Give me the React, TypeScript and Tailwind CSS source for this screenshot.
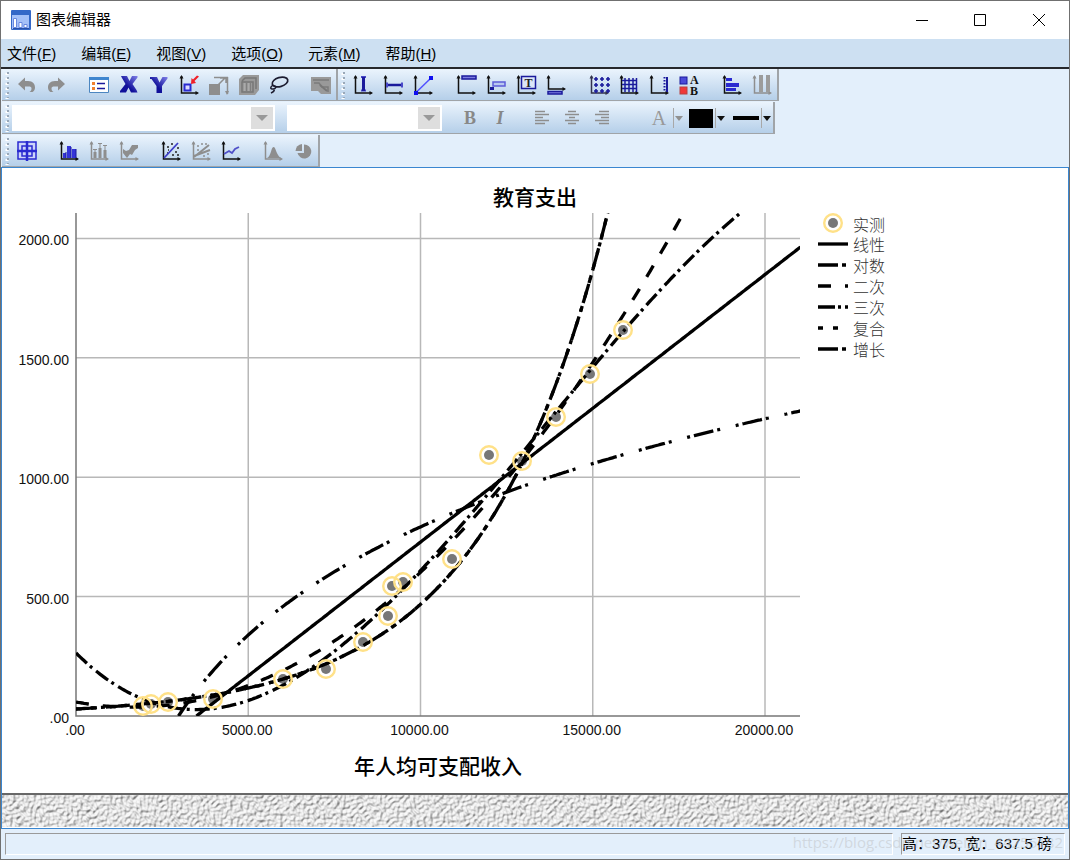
import React from "react";

const NAVY = "#1a1a9c";
const BLUE = "#2a2ad0";
const GRAY = "#8e8e8e";

/* ---------- chart ---------- */

const LEFT = 74;
const RIGHT = 798;
const TOP = 45;
const BOTTOM = 548;

const xPos = (v: number) => LEFT + v * 0.03445;
const yPos = (v: number) => BOTTOM - v * 0.2388;

const xTicks = [0, 5000, 10000, 15000, 20000];
const yTicks = [0, 500, 1000, 1500, 2000];

const tickLabel = (v: number) => (v === 0 ? ".00" : v.toFixed(2));

// curve heights above the axis, u measured from the left edge of the plot
const curves = [
  { name: "linear", from: 120.5, dash: undefined, fn: (u: number) => (u - 120.5) * 0.7765 },
  { name: "log", from: 102.5, dash: "20 4 3 16 3 4", fn: (u: number) => 156 * Math.log(u / 102.5) },
  { name: "quadratic", from: 0, dash: "13 14", fn: (u: number) => 14 - 0.1847 * u + 0.001629 * u * u },
  {
    name: "cubic",
    from: 0,
    dash: "15 4 3 5",
    fn: (u: number) => 63 - 0.991 * u + 0.004736 * u * u - 0.000003383 * u * u * u,
  },
  { name: "compound", from: 0, dash: "6 9", fn: (u: number) => 7 * Math.exp(0.00804 * u) },
  { name: "growth", from: 0, dash: "20 5 4 5", fn: (u: number) => 7 * Math.exp(0.00804 * u) },
];

function curvePath(fn: (u: number) => number, from: number) {
  const pts: string[] = [];
  for (let u = from; u <= RIGHT - LEFT + 2; u += 2) {
    const y = BOTTOM - fn(u);
    pts.push(`${(LEFT + u).toFixed(1)},${y.toFixed(1)}`);
    if (y < TOP - 10) break;
  }
  return "M" + pts.join("L");
}

const observed = [
  [141, 538], [149, 536], [166, 534], [211, 531], [281, 511], [324, 501], [361, 474], [386, 448],
  [390, 418], [401, 414], [450, 391], [487, 287], [520, 293], [554, 249], [588, 206], [621, 162],
];

const legend = [
  { label: "线性", dash: undefined },
  { label: "对数", dash: "20 4 4 10" },
  { label: "二次", dash: "13 14 3 9" },
  { label: "三次", dash: "17 3 3 4 3 9" },
  { label: "复合", dash: "5 10" },
  { label: "增长", dash: "20 4 4 10" },
];

function Chart() {
  return (
    <svg
      width="900"
      height="625"
      viewBox="0 0 900 625"
      role="img"
      aria-label="教育支出"
      className="block shrink-0"
    >
      <clipPath id="plot">
        <rect x={LEFT} y={TOP} width={RIGHT - LEFT} height={BOTTOM - TOP} />
      </clipPath>

      <g stroke="#b8b8b8" strokeWidth="1.5">
        {xTicks.slice(1).map((v) => (
          <line key={v} x1={xPos(v)} x2={xPos(v)} y1={TOP} y2={BOTTOM} />
        ))}
        {yTicks.slice(1).map((v) => (
          <line key={v} x1={LEFT} x2={RIGHT} y1={yPos(v)} y2={yPos(v)} />
        ))}
      </g>
      <path d={`M${LEFT} ${TOP}V${BOTTOM}H${RIGHT}`} fill="none" stroke="#777" strokeWidth="1.5" />

      {observed.map(([x, y]) => (
        <g key={`${x}-${y}`}>
          <circle cx={x} cy={y} r="8" fill="#fff" />
          <circle cx={x} cy={y} r="5" fill="#777" />
        </g>
      ))}
      <g clipPath="url(#plot)" fill="none" stroke="#000" strokeWidth="3.3">
        {curves.map((c) => (
          <path key={c.name} d={curvePath(c.fn, c.from)} strokeDasharray={c.dash} />
        ))}
      </g>
      {observed.map(([x, y]) => (
        <circle key={`${x}-${y}`} cx={x} cy={y} r="8.8" fill="none" stroke="#ffe188" strokeWidth="2.4" />
      ))}

      <g fontFamily="'Liberation Sans', sans-serif" fontSize="14" fill="#111">
        {xTicks.map((v) => (
          <text key={v} x={xPos(v) - 1} y={567} textAnchor="middle">
            {tickLabel(v)}
          </text>
        ))}
        {yTicks.map((v) => (
          <text key={v} x={67} y={yPos(v) + 7} textAnchor="end">
            {tickLabel(v)}
          </text>
        ))}
      </g>

      <g fontFamily="'Noto Sans CJK SC', sans-serif" fill="#000">
        <text x={533} y={37} fontSize="21" fontWeight="500" textAnchor="middle">
          教育支出
        </text>
        <text x={436} y={606} fontSize="21" fontWeight="500" textAnchor="middle">
          年人均可支配收入
        </text>
        <g fontSize="16" fill="#333" fontWeight="300">
          <text x={851} y={63}>实测</text>
          {legend.map((l, i) => (
            <text key={l.label} x={851} y={83 + i * 21}>
              {l.label}
            </text>
          ))}
        </g>
      </g>
      <circle cx="831" cy="55" r="5" fill="#777" />
      <circle cx="831" cy="55" r="8.8" fill="none" stroke="#ffe188" strokeWidth="2.4" />
      {legend.map((l, i) => (
        <line
          key={l.label}
          x1="816"
          x2="846"
          y1={76 + i * 21}
          y2={76 + i * 21}
          stroke="#000"
          strokeWidth="3.3"
          strokeDasharray={l.dash}
        />
      ))}
    </svg>
  );
}

/* ---------- toolbar icons ---------- */

function Icon({ children }: { children: React.ReactNode }) {
  return (
    <svg width="20" height="20" viewBox="0 0 20 20" fill="none" aria-hidden="true" className="overflow-visible">
      {children}
    </svg>
  );
}

function Axes({ color = "#111", base = 18 }: { color?: string; base?: number }) {
  return (
    <>
      <path d={`M2.5 1V${base}H18.5`} stroke={color} strokeWidth="1.5" />
      <path d={`M.5 3.5L2.5 0l2 3.5zM16.5 ${base - 2}L20 ${base}l-3.5 2z`} fill={color} />
    </>
  );
}

const icons = {
  undo: (
    <Icon>
      <path d="M1 9L8 2.5V6h3c5 0 7 3 7 6.500c0 2-1 3.500-2.500 4.500h-3c1.500-1 2-2 2-3.500 0-1.500-1-2-3-2H8v4z" fill={GRAY} />
    </Icon>
  ),
  redo: (
    <Icon>
      <path d="M18 9L11 2.500V6H8c-5 0-7 3-7 6.500 0 2 1 3.500 2.500 4.500h3C5 16 4.500 15 4.500 13.500c0-1.500 1-2 3-2H11v4z" fill={GRAY} />
    </Icon>
  ),
  properties: (
    <Icon>
      <path d="M.5 2.500h19v15H.5z" fill="#fff" stroke="#4c86c0" />
      <path d="M0 2h20v3H0z" fill="#3f86cf" />
      <path d="M3 7h3v3H3zM3 12h3v3H3z" fill="#f08030" />
      <path d="M8 8.500h8M8 13.500h8" stroke={NAVY} strokeWidth="1.500" />
    </Icon>
  ),
  x: (
    <Icon>
      <defs>
        <linearGradient id="letter" x1="0" y1="1" x2="1" y2="0">
          <stop offset=".4" stopColor="#10109a" />
          <stop offset="1" stopColor="#8080e8" />
        </linearGradient>
      </defs>
      <path d="M2 1h6l2.500 5L13 1h5.500v1.500L13.500 9l4 6 1 2.500h-6.500L9.500 12.500 7 17.500H1V16l5.500-7L3 3z" fill="url(#letter)" />
    </Icon>
  ),
  y: (
    <Icon>
      <path d="M1 2h7l2.500 5.500L13.500 2h5v1.500L13 11v7H7.500v-7L2.500 4H1z" fill="url(#letter)" />
    </Icon>
  ),
  scale: (
    <Icon>
      <Axes />
      <rect x="5.500" y="9.500" width="6" height="6" fill="#d8d8ff" stroke={BLUE} strokeWidth="2" />
      <path d="M20 1.500L15.500 6l1.500 2-5 1 .5-6 1.500 1.500L18 .5z" fill="#f02028" />
    </Icon>
  ),
  rescale: (
    <Icon>
      <path d="M0 9h11v11H0z" fill={GRAY} />
      <path d="M5 2.500h14M18.500 2v17M9 10l7-7M11 3h6v5" stroke={GRAY} strokeWidth="1.500" />
      <path d="M16 16h4l-2 4z" fill={GRAY} />
    </Icon>
  ),
  cube: (
    <Icon>
      <path d="M0 4l4-4h16v15l-4 5H0z" fill="#999" />
      <path d="M3 7h11v10H3zM7 8v8M11 8v8M3 6l3-3h11v11" stroke="#777" strokeWidth="1.500" />
      <path d="M6 8v8M10 8v8" stroke="#bbb" />
    </Icon>
  ),
  lasso: (
    <Icon>
      <ellipse cx="11" cy="7" rx="8" ry="4.500" transform="rotate(-16 11 7)" stroke="#1c1c30" strokeWidth="1.700" />
      <path d="M4 10c-3 2-3 4 0 4s4-3 1-3M5 14c1 2-1 3-3 4" stroke="#1c1c30" strokeWidth="1.500" />
    </Icon>
  ),
  pane: (
    <Icon>
      <path d="M0 2h20v12l0 5H10l-3-3H0z" fill="#999" />
      <path d="M2 5h16M3 8h5l3 4h6v5" stroke="#7b7b7b" strokeWidth="1.500" />
      <path d="M9 10l7 6" stroke="#777" strokeWidth="2" />
    </Icon>
  ),
  yError: (
    <Icon>
      <Axes />
      <path d="M8 2h5M8 15.500h5" stroke="#4848c8" strokeWidth="2" />
      <path d="M10.500 2v14" stroke={NAVY} strokeWidth="3" />
    </Icon>
  ),
  xError: (
    <Icon>
      <Axes />
      <path d="M3 10h17" stroke={NAVY} strokeWidth="2.500" />
      <path d="M4 7.500v5M19 7.500v5" stroke="#4848c8" strokeWidth="2" />
    </Icon>
  ),
  refLine: (
    <Icon>
      <Axes />
      <path d="M2.500 18L18 3" stroke="#5050ff" strokeWidth="1.500" />
      <path d="M1 16h4v4H1zM16 1h4v4h-4z" fill="#1010f0" />
    </Icon>
  ),
  title: (
    <Icon>
      <Axes />
      <rect x="6" y="1" width="14" height="3" fill="#7c7ce0" stroke={NAVY} strokeWidth="1.500" />
    </Icon>
  ),
  annotation: (
    <Icon>
      <Axes />
      <rect x="7" y="7" width="12" height="4" fill="#b8c8f0" stroke="#5c5cd8" strokeWidth="1.500" />
      <path d="M4 12h4v3H4z" fill={NAVY} />
    </Icon>
  ),
  textBox: (
    <Icon>
      <Axes />
      <rect x="5.500" y="1.500" width="14" height="12" fill="#dce6f8" stroke={NAVY} strokeWidth="1.500" />
      <text x="12.500" y="12" textAnchor="middle" fontFamily="Liberation Serif, serif" fontWeight="700" fontSize="12" fill="#222">
        T
      </text>
    </Icon>
  ),
  footnote: (
    <Icon>
      <Axes base={14} />
      <rect x="2" y="16.500" width="14" height="2.500" fill="#7c7ce0" stroke={NAVY} strokeWidth="1.500" />
    </Icon>
  ),
  dots: (
    <Icon>
      <Axes color="#33334c" />
      <path
        d="M5 4h4M11 4h4M17 4h4M5 10h4M11 10h4M17 10h4M5 16h4M11 16h4M17 16h4M7 2v4M13 2v4M19 2v4M7 8v4M13 8v4M19 8v4M7 14v4M13 14v4M19 14v4"
        stroke={NAVY}
        strokeWidth="1.600"
      />
    </Icon>
  ),
  grid: (
    <Icon>
      <Axes />
      <path d="M3 5.500h15M3 9.500h15M3 13.500h15M6 3v14M10 3v14M14 3v14M17.500 3v14" stroke={NAVY} strokeWidth="1.500" />
    </Icon>
  ),
  derivedAxis: (
    <Icon>
      <Axes />
      <path d="M18 2v15" stroke={NAVY} strokeWidth="2" />
      <path d="M15.500 2v15" stroke={NAVY} strokeWidth="2" strokeDasharray="1.500 1.500" />
    </Icon>
  ),
  legend: (
    <Icon>
      <rect x="1" y="2" width="7" height="7" fill="#4a4ad8" stroke={NAVY} />
      <rect x="1" y="12" width="7" height="7" fill="#f03838" stroke="#b84040" />
      <g fontFamily="Liberation Serif, serif" fontWeight="700" fontSize="12" fill="#111">
        <text x="11" y="9">A</text>
        <text x="11" y="20">B</text>
      </g>
    </Icon>
  ),
  transpose: (
    <Icon>
      <Axes />
      <path d="M4 3h6v3H4zM4 8h13v4H4zM4 13h10v3H4z" fill={BLUE} />
    </Icon>
  ),
  columns: (
    <Icon>
      <Axes color={GRAY} />
      <path d="M7 0h4v17H7zM14 0h4v17h-4z" fill="#9c9c9c" />
    </Icon>
  ),
  select: (
    <Icon>
      <rect x="1" y="1" width="18" height="17" stroke={BLUE} strokeWidth="1.500" fill="#cdd4fa" />
      <rect x="5" y="5" width="10" height="10" stroke={BLUE} strokeWidth="1.500" />
      <path d="M10 0v20M0 10h20" stroke={BLUE} strokeWidth="2.500" />
    </Icon>
  ),
  bars: (
    <Icon>
      <Axes />
      <path d="M4 12h3v5H4zM8 5h4v12H8zM13 8h4v9h-4z" fill="#3434d8" />
      <path d="M7 11v6M12 6v11M17 8v9" stroke={NAVY} />
    </Icon>
  ),
  errorBars: (
    <Icon>
      <Axes color={GRAY} />
      <path d="M4.500 11h3v6h-3zM9.500 7h3v10h-3zM14.500 9h3v8h-3z" fill={GRAY} />
      <path d="M4 8.500h4M6 8v3M9 2.500h4M11 2v5M14 4.500h4M16 4v5" stroke={GRAY} />
    </Icon>
  ),
  area: (
    <Icon>
      <Axes color={GRAY} />
      <path d="M4 8l3 2 3-1 3-5h6v3l-3 2-3 5-2-1-3 4-4-5z" fill={GRAY} />
    </Icon>
  ),
  fitLine: (
    <Icon>
      <Axes />
      <path d="M6 6h2M10 3h2M16 7h2M14 11h2M6 12h1M11 14h2M16 14h2M7 9h1" stroke="#222" strokeWidth="1.500" />
      <path d="M3 17L17 2" stroke="#3c3cc8" strokeWidth="1.800" />
    </Icon>
  ),
  groupFit: (
    <Icon>
      <Axes color={GRAY} />
      <path d="M3 16L18 4M3 15l16-6" stroke={GRAY} strokeWidth="2" />
      <path d="M6 5h2M10 3h2M14 3h2M16 13h2M12 15h2M6 9h2" stroke={GRAY} strokeWidth="1.500" />
    </Icon>
  ),
  line: (
    <Icon>
      <Axes />
      <path d="M3 13l5-3 3 2 3-4 4-2" stroke="#5050c8" strokeWidth="1.800" />
    </Icon>
  ),
  distribution: (
    <Icon>
      <Axes color={GRAY} />
      <path d="M4 17c4-1 4-11 6.500-11S13 14 18 17z" fill={GRAY} />
    </Icon>
  ),
  pie: (
    <Icon>
      <path d="M11 3.500a7 7 0 1 1-6.500 8.500H11z" fill={GRAY} />
      <path d="M9 3v7H2.500a7 7 0 0 1 6.500-7z" fill={GRAY} />
    </Icon>
  ),
  alignLeft: (
    <Icon>
      <path d="M3 3.500h10M3 6.500h14M3 9.500h8M3 12.500h14M3 15.500h10" stroke={GRAY} strokeWidth="1.500" />
    </Icon>
  ),
  alignCenter: (
    <Icon>
      <path d="M6 3.500h8M3 6.500h14M7 9.500h6M3 12.500h14M6 15.500h8" stroke={GRAY} strokeWidth="1.500" />
    </Icon>
  ),
  alignRight: (
    <Icon>
      <path d="M7 3.500h10M3 6.500h14M9 9.500h8M3 12.500h14M7 15.500h10" stroke={GRAY} strokeWidth="1.500" />
    </Icon>
  ),
};

type IconName = keyof typeof icons;

/* ---------- toolbars ---------- */

function Toolbar({ label, children }: { label: string; children: React.ReactNode }) {
  return (
    <div
      role="toolbar"
      aria-label={label}
      className="flex h-8 items-center border-r-2 border-b border-[#a0a4a8] bg-linear-to-b from-[#ebf4fd] to-[#b5cfe9] pt-px"
    >
      <svg width="10" height="30" className="shrink-0" aria-hidden="true">
        <path d="M5 3v26" stroke="#fff" strokeWidth="3" strokeDasharray="2 3" />
        <path d="M6 2v26" stroke="#9aa8b8" strokeWidth="2" strokeDasharray="2 3" />
      </svg>
      {children}
    </div>
  );
}

function IconGroups({ groups, gap = "gap-3" }: { groups: IconName[][]; gap?: string }) {
  return (
    <div className={`flex ${gap}`}>
      {groups.map((group) => (
        <div key={group[0]} className="flex">
          {group.map((name) => (
            <button key={name} type="button" aria-label={name} className="flex h-7 w-[30px] items-center justify-center">
              {icons[name]}
            </button>
          ))}
        </div>
      ))}
    </div>
  );
}

function Combo({ label, className }: { label: string; className: string }) {
  return (
    <div className={`relative h-[26px] border-2 border-white bg-white ${className}`}>
      <select aria-label={label} className="h-full w-full appearance-none bg-white text-sm outline-none" />
      <span className="pointer-events-none absolute inset-y-0 right-0 flex w-[22px] items-center justify-center bg-[#dedede]">
        <svg width="12" height="6" aria-hidden="true">
          <path d="M0 0h12L6 6z" fill="#999" />
        </svg>
      </span>
    </div>
  );
}

function DropButton({ label, arrow = "#111", children }: { label: string; arrow?: string; children: React.ReactNode }) {
  return (
    <button type="button" aria-label={label} className="flex h-7 items-center">
      {children}
      <span className="flex h-5 w-3 items-center border-l border-[#a8a8a8]">
        <svg width="8" height="5" className="ml-px" aria-hidden="true">
          <path d="M0 0h8L4 5z" fill={arrow} />
        </svg>
      </span>
    </button>
  );
}

const menus = [
  ["文件", "F"],
  ["编辑", "E"],
  ["视图", "V"],
  ["选项", "O"],
  ["元素", "M"],
  ["帮助", "H"],
];

export default function App() {
  return (
    <div className="flex min-h-screen flex-col border border-[#707070] bg-[#e3effb] font-['Liberation_Sans','Noto_Sans_CJK_SC',sans-serif] text-[15px] text-black">
      <header className="flex h-[38px] items-center bg-white pl-[10px]">
        <svg width="20" height="20" viewBox="0 0 20 20" aria-hidden="true">
          <rect width="20" height="20" rx="1" fill="#3468c8" />
          <path d="M1 5h17v14H1z" fill="#a4c0f8" />
          <path d="M2.500 8.500h3v9h-3zM8 12.500h3v5H8zM13 14.500h3v3h-3z" fill="#fff" stroke="#6888e0" />
          <path d="M2 18.500h16" stroke="#2850a8" />
        </svg>
        <h1 className="ml-[5px] flex-1">图表编辑器</h1>
        <button type="button" aria-label="最小化" className="flex h-full w-[58px] items-center justify-center">
          <svg width="12" height="12"><path d="M0 6.500h12" stroke="#000" /></svg>
        </button>
        <button type="button" aria-label="最大化" className="flex h-full w-[58px] items-center justify-center">
          <svg width="12" height="12"><path d="M.5.5h11v11H.5z" fill="none" stroke="#000" /></svg>
        </button>
        <button type="button" aria-label="关闭" className="flex h-full w-[60px] items-center justify-center">
          <svg width="12" height="12"><path d="M0 0l12 12M12 0L0 12" stroke="#000" /></svg>
        </button>
      </header>

      <nav className="flex h-[30px] items-center gap-[25px] border-b-2 border-[#26282c] bg-[#cde0f2] pt-0.5 pl-[6px]">
        {menus.map(([name, key]) => (
          <button key={key} type="button">
            {name}(<span className="underline">{key}</span>)
          </button>
        ))}
      </nav>

      <div className="flex flex-col items-start gap-px pl-px">
        <div className="flex">
          <Toolbar label="编辑">
            <IconGroups groups={[["undo", "redo"], ["properties", "x", "y", "scale", "rescale", "cube", "lasso"], ["pane"]]} />
          </Toolbar>
          <Toolbar label="选项">
            <IconGroups
              gap="gap-[13px]"
              groups={[
                ["yError", "xError", "refLine"],
                ["title", "annotation", "textBox", "footnote"],
                ["dots", "grid", "derivedAxis", "legend"],
                ["transpose", "columns"],
              ]}
            />
          </Toolbar>
        </div>
        <Toolbar label="格式">
          <Combo label="字体" className="w-[263px]" />
          <Combo label="字号" className="ml-3 w-[155px]" />
          <div className="ml-[13px] flex font-['Liberation_Serif',serif] text-lg font-bold text-[#888]">
            <button type="button" className="w-[30px]">B</button>
            <button type="button" className="w-[30px] italic">I</button>
          </div>
          <div className="ml-3">
            <IconGroups groups={[["alignLeft", "alignCenter", "alignRight"]]} />
          </div>
          <div className="ml-7 flex gap-1">
            <DropButton label="文本颜色" arrow="#909090">
              <span className="w-7 text-center font-['Liberation_Serif',serif] text-xl text-[#999]">A</span>
            </DropButton>
            <DropButton label="填充颜色">
              <span className="mr-[2px] h-[19px] w-6 bg-black" />
            </DropButton>
            <DropButton label="线型">
              <span className="mr-[2px] ml-[2px] h-1 w-[26px] bg-black" />
            </DropButton>
          </div>
        </Toolbar>
        <Toolbar label="元素">
          <IconGroups
            groups={[
              ["select"],
              ["bars", "errorBars", "area"],
              ["fitLine", "groupFit", "line"],
              ["distribution", "pie"],
            ]}
          />
        </Toolbar>
      </div>

      <main className="flex flex-1 flex-col border border-[#3a86d0] bg-white">
        <Chart />
        <div className="min-h-8 flex-1 border-t-2 border-[#686868]">
          <svg width="100%" height="100%" className="block h-8" aria-hidden="true">
            <defs>
              <filter id="stone" x="0" y="0" width="100%" height="100%">
                <feTurbulence type="fractalNoise" baseFrequency="0.3" numOctaves="1" seed="4" />
                <feColorMatrix values="0 0 0 0 0  0 0 0 0 0  0 0 0 0 0  1.6 0 0 0 -0.3" />
                <feDiffuseLighting surfaceScale="1.8" diffuseConstant="1.1" lightingColor="#f0f0f0">
                  <feDistantLight azimuth="230" elevation="56" />
                </feDiffuseLighting>
              </filter>
            </defs>
            <rect width="100%" height="100%" filter="url(#stone)" />
          </svg>
        </div>
      </main>

      <footer className="relative flex h-[30px] gap-2 px-1 pt-1 pb-1">
        <div className="flex-1 border border-t-[#9a9a9a] border-r-white border-b-white border-l-[#9a9a9a]" />
        <div className="flex w-[164px] items-end overflow-hidden border border-t-[#9a9a9a] border-r-white border-b-white border-l-[#9a9a9a] leading-5 whitespace-nowrap">
          高：375, 宽：637.5 磅
        </div>
        <span className="absolute right-[6px] bottom-[6px] font-['Open_Sans',sans-serif] text-[15px] text-[#c4c8cc]/60">
          https://blog.csdn.net/weixin_44255182
        </span>
      </footer>
    </div>
  );
}
